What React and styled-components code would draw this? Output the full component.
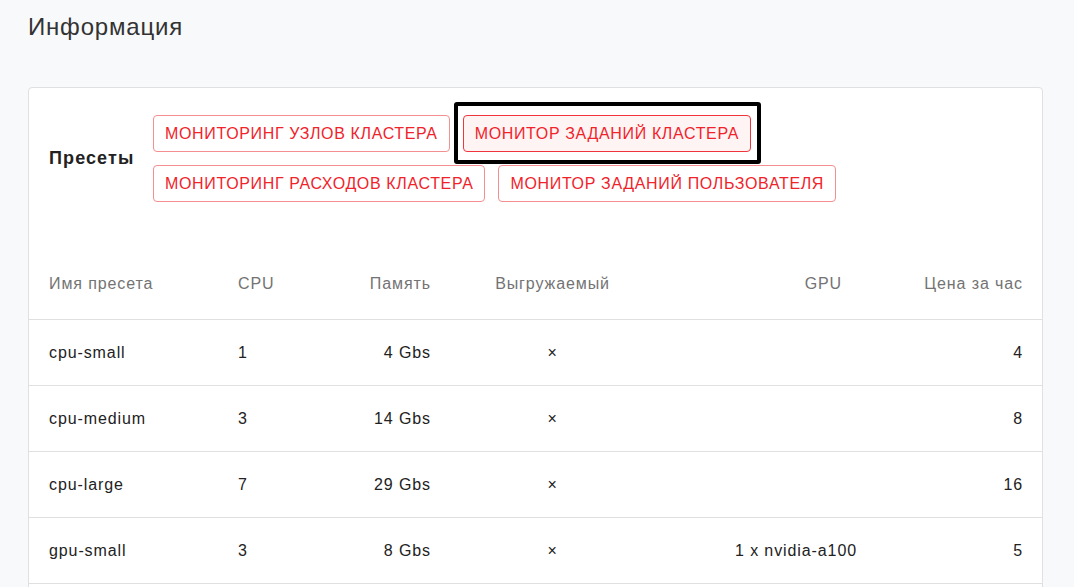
import React from "react";
import styled, { createGlobalStyle } from "styled-components";

const GlobalStyle = createGlobalStyle`
  body {
    margin: 0;
    background: #f8f9fb;
    font-family: "Liberation Sans", Arial, sans-serif;
  }
`;

const Page = styled.div`
  padding: 13px 31px 0 28px;
`;

const Title = styled.h1`
  margin: 0 0 46px;
  font-size: 24px;
  line-height: 28px;
  font-weight: 400;
  letter-spacing: 0.8px;
  color: #333;
`;

const Card = styled.div`
  background: #fff;
  border: 1px solid #e0e0e0;
  border-radius: 4px;
`;

const Presets = styled.div`
  display: flex;
  align-items: center;
  padding: 27px 20px 51px;
`;

const PresetsLabel = styled.div`
  width: 104px;
  flex-shrink: 0;
  font-size: 18px;
  font-weight: 700;
  letter-spacing: 1.1px;
  color: #222;
`;

const ButtonGrid = styled.div`
  display: flex;
  flex-direction: column;
  gap: 13px;
`;

const ButtonRow = styled.div`
  display: flex;
  gap: 13px;
`;

const PresetButton = styled.button`
  position: relative;
  height: 37px;
  padding: 0 11px;
  font-family: "Liberation Sans", Arial, sans-serif;
  font-size: 16px;
  letter-spacing: 0.65px;
  text-transform: uppercase;
  color: #f0232b;
  background: ${(p) => (p.$active ? "#fff4f4" : "#fff")};
  border: 1px solid ${(p) => (p.$active ? "#f0363c" : "#f48f91")};
  border-radius: 4px;
  cursor: pointer;

  ${(p) =>
    p.$active &&
    `
    &::after {
      content: "";
      position: absolute;
      top: -14px;
      bottom: -13px;
      left: -10px;
      right: -11px;
      border: 4px solid #000;
      border-radius: 3px;
      pointer-events: none;
    }
  `}
`;

const columns = "189px 82px 111px 243px 183px 166px";

const Row = styled.div`
  display: grid;
  grid-template-columns: ${columns};
  align-items: center;
  height: ${(p) => (p.$head ? "62px" : "65px")};
  padding: ${(p) => (p.$head ? "0 18px 4px 20px" : "0 18px 0 20px")};
  border-bottom: 1px solid #e0e0e0;
  font-size: 16px;
  letter-spacing: 0.9px;
  color: ${(p) => (p.$head ? "#737373" : "#222")};
`;

const Cell = styled.div`
  text-align: ${(p) => p.$align || "left"};
  padding-right: ${(p) => p.$pr || 0}px;
  white-space: nowrap;
`;

const presets = [
  ["cpu-small", "1", "4 Gbs", "×", "", "4"],
  ["cpu-medium", "3", "14 Gbs", "×", "", "8"],
  ["cpu-large", "7", "29 Gbs", "×", "", "16"],
  ["gpu-small", "3", "8 Gbs", "×", "1 x nvidia-a100", "5"],
  ["gpu-medium", "7", "29 Gbs", "×", "1 x nvidia-a100", "10"],
];

const aligns = ["left", "left", "right", "center", "right", "right"];

export default function App() {
  return (
    <>
      <GlobalStyle />
      <Page>
        <Title>Информация</Title>
        <Card>
          <Presets>
            <PresetsLabel>Пресеты</PresetsLabel>
            <ButtonGrid>
              <ButtonRow>
                <PresetButton>Мониторинг узлов кластера</PresetButton>
                <PresetButton $active>Монитор заданий кластера</PresetButton>
              </ButtonRow>
              <ButtonRow>
                <PresetButton>Мониторинг расходов кластера</PresetButton>
                <PresetButton>Монитор заданий пользователя</PresetButton>
              </ButtonRow>
            </ButtonGrid>
          </Presets>
          <Row $head>
            <Cell>Имя пресета</Cell>
            <Cell>CPU</Cell>
            <Cell $align="right">Память</Cell>
            <Cell $align="center">Выгружаемый</Cell>
            <Cell $align="right" $pr={15}>GPU</Cell>
            <Cell $align="right">Цена за час</Cell>
          </Row>
          {presets.map((row) => (
            <Row key={row[0]}>
              {row.map((v, i) => (
                <Cell key={i} $align={aligns[i]}>
                  {v}
                </Cell>
              ))}
            </Row>
          ))}
        </Card>
      </Page>
    </>
  );
}
